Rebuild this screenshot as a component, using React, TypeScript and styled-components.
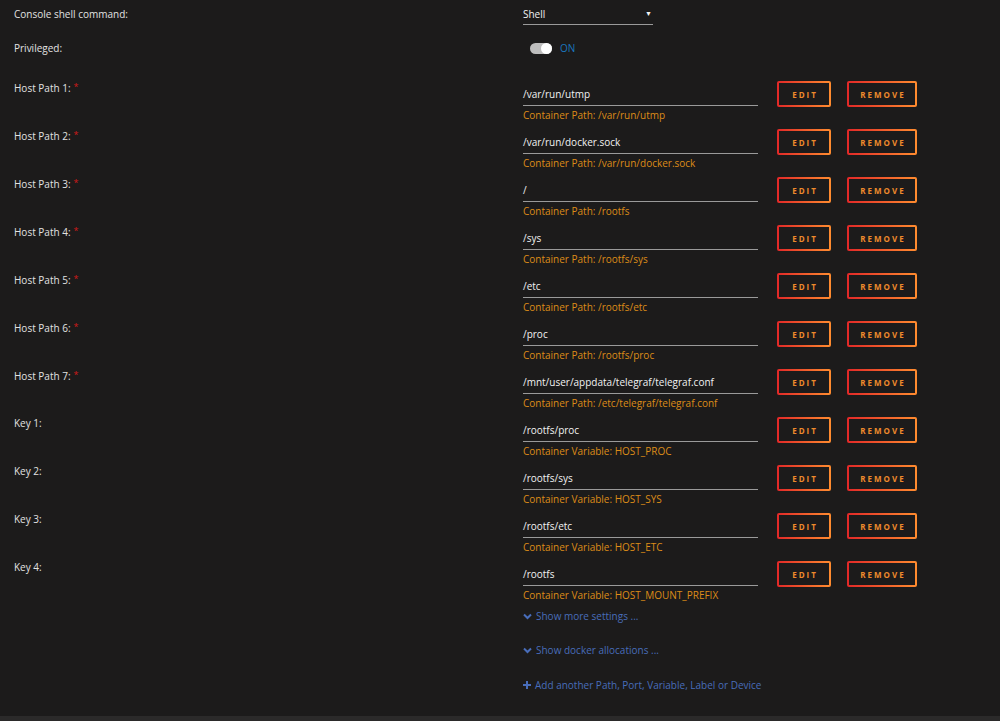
import React from "react";
import styled, { createGlobalStyle } from "styled-components";

const GlobalStyle = createGlobalStyle`
  html, body { margin: 0; padding: 0; background: #1c1b1b; }
  body { font-family: "Open Sans", "Noto Sans", sans-serif; -webkit-font-smoothing: antialiased; }
`;

const Page = styled.div`
  height: 721px;
  display: flex;
  flex-direction: column;
  background: #1c1b1b;
  overflow: hidden;
`;

const Content = styled.div`
  flex: 1;
  padding-top: 5px;
`;

const Footer = styled.div`
  height: 5px;
  background: #2b2a2a;
`;

const Row = styled.div<{ $h: number }>`
  display: grid;
  grid-template-columns: 509px 1fr;
  align-items: start;
  height: ${(p) => p.$h}px;
`;

const Label = styled.div`
  padding-left: 14px;
  padding-top: 1px;
  font-size: 10px;
  line-height: 16px;
  color: #e2e2e2;
`;

const Req = styled.span`
  color: #d11a1a;
  font-size: 9px;
  vertical-align: 2px;
  margin-left: 3px;
`;

const SelectCell = styled.div`
  padding-left: 14px;
`;

const Select = styled.div`
  width: 130px;
  box-sizing: border-box;
  margin-top: 1px;
  padding-bottom: 2px;
  border-bottom: 1px solid #9a9a9a;
  display: flex;
  justify-content: space-between;
  align-items: center;
  font-size: 10px;
  line-height: 16px;
  color: #f2f2f2;
`;

const Caret = styled.span`
  font-size: 7px;
  color: #f2f2f2;
  margin-right: 1px;
`;

const ToggleWrap = styled.div`
  display: flex;
  align-items: center;
  gap: 8px;
  padding-left: 21px;
  margin-top: 1px;
  height: 16px;
`;

const Track = styled.div`
  width: 22px;
  height: 11px;
  border-radius: 6px;
  background: #bdbdbd;
  position: relative;
`;

const Knob = styled.div`
  position: absolute;
  right: 0;
  top: 0;
  width: 11px;
  height: 11px;
  border-radius: 50%;
  background: #ffffff;
`;

const OnText = styled.span`
  font-size: 10px;
  line-height: 16px;
  color: #1a76bd;
`;

const ValueCell = styled.div`
  display: flex;
  align-items: flex-start;
  padding-left: 14px;
`;

const InputBlock = styled.div`
  width: 235px;
`;

const Field = styled.div`
  padding-top: 8px;
  padding-bottom: 3px;
  border-bottom: 1px solid #9a9a9a;
  font-size: 10px;
  line-height: 16px;
  color: #f2f2f2;
`;

const Hint = styled.div`
  margin-top: 1px;
  font-size: 10px;
  line-height: 16px;
  color: #dc8c18;
`;

const Buttons = styled.div`
  display: flex;
  gap: 16px;
  margin-left: 19px;
  margin-top: 3px;
`;

const Btn = styled.button<{ $w: number }>`
  width: ${(p) => p.$w}px;
  height: 26px;
  box-sizing: border-box;
  border: 2px solid transparent;
  border-radius: 2px;
  background: linear-gradient(#1c1b1b, #1c1b1b) padding-box,
    linear-gradient(90deg, #e22828 0%, #ff8c2f 100%) border-box;
  color: #ee8a2c;
  font-family: "Open Sans", "Noto Sans", sans-serif;
  font-weight: 700;
  font-size: 8px;
  letter-spacing: 2px;
  padding: 0 0 0 2px;
  text-transform: uppercase;
  cursor: pointer;
`;

const Links = styled.div`
  padding-left: 523px;
  padding-top: 2px;
  display: flex;
  flex-direction: column;
`;

const LinkLine = styled.a<{ $mt: number }>`
  display: flex;
  align-items: center;
  gap: 4px;
  margin-top: ${(p) => p.$mt}px;
  font-size: 10px;
  line-height: 16px;
  color: #486dba;
  text-decoration: none;
  cursor: pointer;
`;

const Chevron = () => (
  <svg width="9" height="7" viewBox="0 0 9 7">
    <path d="M1 1.5 L4.5 5 L8 1.5" stroke="#486dba" strokeWidth="2" fill="none" />
  </svg>
);

const Plus = () => (
  <svg width="8" height="8" viewBox="0 0 8 8">
    <path d="M4 0 V8 M0 4 H8" stroke="#486dba" strokeWidth="2" />
  </svg>
);

const rows: { label: string; req: boolean; value: string; hint: string }[] = [
  { label: "Host Path 1:", req: true, value: "/var/run/utmp", hint: "Container Path: /var/run/utmp" },
  { label: "Host Path 2:", req: true, value: "/var/run/docker.sock", hint: "Container Path: /var/run/docker.sock" },
  { label: "Host Path 3:", req: true, value: "/", hint: "Container Path: /rootfs" },
  { label: "Host Path 4:", req: true, value: "/sys", hint: "Container Path: /rootfs/sys" },
  { label: "Host Path 5:", req: true, value: "/etc", hint: "Container Path: /rootfs/etc" },
  { label: "Host Path 6:", req: true, value: "/proc", hint: "Container Path: /rootfs/proc" },
  { label: "Host Path 7:", req: true, value: "/mnt/user/appdata/telegraf/telegraf.conf", hint: "Container Path: /etc/telegraf/telegraf.conf" },
  { label: "Key 1:", req: false, value: "/rootfs/proc", hint: "Container Variable: HOST_PROC" },
  { label: "Key 2:", req: false, value: "/rootfs/sys", hint: "Container Variable: HOST_SYS" },
  { label: "Key 3:", req: false, value: "/rootfs/etc", hint: "Container Variable: HOST_ETC" },
  { label: "Key 4:", req: false, value: "/rootfs", hint: "Container Variable: HOST_MOUNT_PREFIX" },
];

export default function App() {
  return (
    <Page>
      <GlobalStyle />
      <Content>
        <Row $h={34}>
          <Label>Console shell command:</Label>
          <SelectCell>
            <Select>
              <span>Shell</span>
              <Caret>▼</Caret>
            </Select>
          </SelectCell>
        </Row>
        <Row $h={39}>
          <Label>Privileged:</Label>
          <ToggleWrap>
            <Track>
              <Knob />
            </Track>
            <OnText>ON</OnText>
          </ToggleWrap>
        </Row>
        {rows.map((r) => (
          <Row $h={48} key={r.label}>
            <Label>
              {r.label}
              {r.req && <Req>*</Req>}
            </Label>
            <ValueCell>
              <InputBlock>
                <Field>{r.value}</Field>
                <Hint>{r.hint}</Hint>
              </InputBlock>
              <Buttons>
                <Btn $w={54}>Edit</Btn>
                <Btn $w={70}>Remove</Btn>
              </Buttons>
            </ValueCell>
          </Row>
        ))}
        <Links>
          <LinkLine $mt={0}>
            <Chevron />
            Show more settings ...
          </LinkLine>
          <LinkLine $mt={18}>
            <Chevron />
            Show docker allocations ...
          </LinkLine>
          <LinkLine $mt={19}>
            <Plus />
            Add another Path, Port, Variable, Label or Device
          </LinkLine>
        </Links>
      </Content>
      <Footer />
    </Page>
  );
}
